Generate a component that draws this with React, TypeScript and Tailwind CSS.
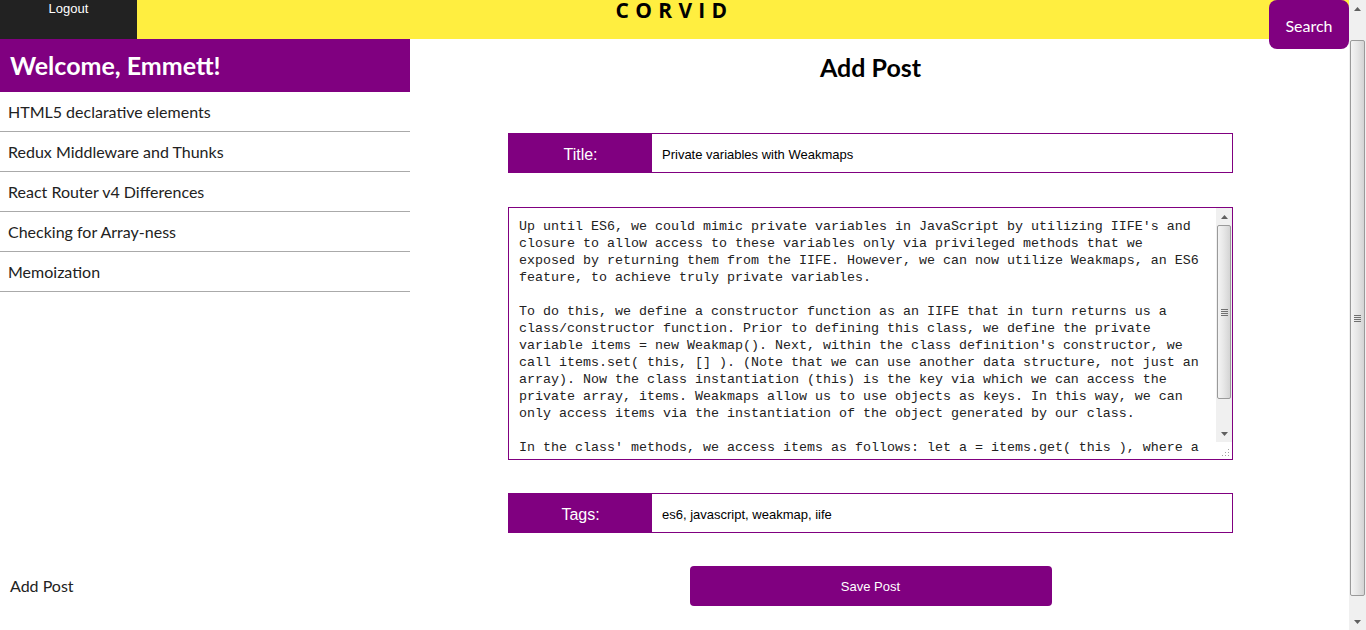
import React, { useState } from 'react';

const posts = [
  'HTML5 declarative elements',
  'Redux Middleware and Thunks',
  'React Router v4 Differences',
  'Checking for Array-ness',
  'Memoization',
];

const initialBody = `Up until ES6, we could mimic private variables in JavaScript by utilizing IIFE's and closure to allow access to these variables only via privileged methods that we exposed by returning them from the IIFE. However, we can now utilize Weakmaps, an ES6 feature, to achieve truly private variables.

To do this, we define a constructor function as an IIFE that in turn returns us a class/constructor function. Prior to defining this class, we define the private variable items = new Weakmap(). Next, within the class definition's constructor, we call items.set( this, [] ). (Note that we can use another data structure, not just an array). Now the class instantiation (this) is the key via which we can access the private array, items. Weakmaps allow us to use objects as keys. In this way, we can only access items via the instantiation of the object generated by our class.

In the class' methods, we access items as follows: let a = items.get( this ), where a is now a reference to the private array, and we can push to it, pop from it, or read from it as we please.`;

// classic windows-style scrollbar, drawn
const Arrow = ({ up }: { up?: boolean }) => (
  <div className="h-[17px] flex items-center justify-center">
    <svg width="7" height="4" viewBox="0 0 7 4">
      <path d={up ? 'M0 4 L3.5 0 L7 4 Z' : 'M0 0 L3.5 4 L7 0 Z'} fill="#606060" />
    </svg>
  </div>
);

const Thumb = ({ className }: { className: string }) => (
  <div className={`mx-[1px] rounded-[2px] border border-[#9a9a9a] bg-gradient-to-r from-[#f4f4f4] via-[#e6e6e6] to-[#d4d4d4] flex items-center justify-center ${className}`}>
    <div className="flex flex-col gap-[1px]">
      <div className="w-[7px] h-[1px] bg-[#707070]" />
      <div className="w-[7px] h-[1px] bg-[#707070]" />
      <div className="w-[7px] h-[1px] bg-[#707070]" />
      <div className="w-[7px] h-[1px] bg-[#707070]" />
    </div>
  </div>
);

const App: React.FC = () => {
  const [title, setTitle] = useState('Private variables with Weakmaps');
  const [body, setBody] = useState(initialBody);
  const [tags, setTags] = useState('es6, javascript, weakmap, iife');

  return (
    <div className="h-screen flex overflow-hidden bg-white font-['Lato',sans-serif] text-[#222]">
      <div className="flex-1 flex flex-col">
        {/* Top bar */}
        <header className="grid grid-cols-[137px_1fr_137px] grid-rows-[39px] h-[39px] bg-[#ffee40] relative z-10">
          <div className="bg-[#222] text-white text-center text-[13px] leading-[18px] font-['Liberation_Sans',sans-serif]">
            Logout
          </div>
          <div className="text-center overflow-hidden">
            <span className="inline-block -mt-[3px] text-[21px] leading-[22px] font-bold tracking-[0.3em] text-black font-['Open_Sans',sans-serif]">
              CORVID
            </span>
          </div>
          <div className="flex justify-end items-start">
            <button className="h-[49px] w-[80px] pt-[3px] rounded-lg bg-[#800080] text-white text-[16px]">
              Search
            </button>
          </div>
        </header>

        <div className="flex flex-1">
          {/* Sidebar */}
          <aside className="w-[410px] flex flex-col">
            <div className="h-[53px] bg-[#800080] text-white text-[25px] font-bold px-[10px] flex items-center">
              Welcome, Emmett!
            </div>
            <ul>
              {posts.map((p) => (
                <li key={p} className="h-[40px] border-b border-[#aaa] px-[8px] flex items-center text-[16px]">
                  {p}
                </li>
              ))}
            </ul>
            <div className="flex-1" />
            <div className="px-[10px] pb-[32px] text-[16px] leading-[24px]">Add Post</div>
          </aside>

          {/* Main */}
          <main className="flex-1 pl-[98px]">
            <div className="w-[725px] flex flex-col">
              <h2 className="mt-[14px] text-center text-[25px] leading-[28px] font-bold text-black">Add Post</h2>

              <div className="mt-[52px] flex h-[40px] border border-[#800080] font-['Liberation_Sans',sans-serif]">
                <label className="w-[143px] pt-[4px] bg-[#800080] text-white text-[16px] flex items-center justify-center">
                  Title:
                </label>
                <input
                  value={title}
                  onChange={(e) => setTitle(e.target.value)}
                  className="flex-1 px-[10px] pt-[4px] text-[13px] text-black outline-none"
                />
              </div>

              <div className="mt-[34px] h-[253px] flex border border-[#800080]">
                <textarea
                  value={body}
                  onChange={(e) => setBody(e.target.value)}
                  className="flex-1 h-full pl-[10px] pr-[11px] py-[10px] text-[13.33px] leading-[17px] text-[#222] font-['Liberation_Mono',monospace] resize-none outline-none overflow-hidden"
                />
                <div className="w-[16px] flex flex-col">
                  <div className="flex-1 flex flex-col bg-[#f0f0f0]">
                    <Arrow up />
                    <div className="flex-1 flex flex-col">
                      <Thumb className="h-[174px]" />
                    </div>
                    <Arrow />
                  </div>
                  <div className="h-[17px] bg-white flex items-end justify-end p-[2px]">
                    <svg width="8" height="8" viewBox="0 0 8 8">
                      <g fill="#a0a0a0">
                        <rect x="6" y="0" width="1" height="1" />
                        <rect x="3" y="3" width="1" height="1" />
                        <rect x="6" y="3" width="1" height="1" />
                        <rect x="0" y="6" width="1" height="1" />
                        <rect x="3" y="6" width="1" height="1" />
                        <rect x="6" y="6" width="1" height="1" />
                      </g>
                    </svg>
                  </div>
                </div>
              </div>

              <div className="mt-[33px] flex h-[40px] border border-[#800080] font-['Liberation_Sans',sans-serif]">
                <label className="w-[143px] pt-[4px] bg-[#800080] text-white text-[16px] flex items-center justify-center">
                  Tags:
                </label>
                <input
                  value={tags}
                  onChange={(e) => setTags(e.target.value)}
                  className="flex-1 px-[10px] pt-[4px] text-[13px] text-black outline-none"
                />
              </div>

              <div className="mt-[33px] flex justify-center">
                <button className="w-[362px] h-[40px] pt-[2px] rounded bg-[#800080] text-white text-[13px] font-['Liberation_Sans',sans-serif]">
                  Save Post
                </button>
              </div>
            </div>
          </main>
        </div>
      </div>

      {/* page scrollbar */}
      <div className="w-[17px] flex flex-col bg-[#f0f0f0]">
        <Arrow up />
        <div className="flex-1 flex flex-col pt-[23px] pb-[17px]">
          <Thumb className="flex-1" />
        </div>
        <Arrow />
      </div>
    </div>
  );
};

export default App;
